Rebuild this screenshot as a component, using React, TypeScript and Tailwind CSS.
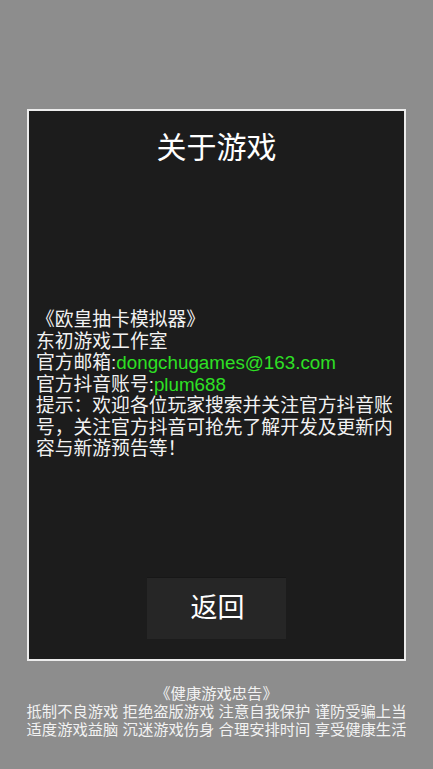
export default function App() {
  const font = { fontFamily: '"Liberation Sans", "Noto Sans CJK SC", sans-serif' };
  return (
    <div className="w-full h-[769px] bg-[#8d8d8d] flex flex-col overflow-hidden" style={font}>
      <div className="mt-[109px] mx-[27px] h-[552px] border-2 border-[#ececec] bg-[#1c1c1c] flex flex-col">
        <div className="pt-[19px] text-center text-white text-[30px] leading-[36px]">关于游戏</div>
        <div className="mt-[143px] pl-[7px] pr-[4px] text-[#f2f2f2] text-[18.8px] leading-[21.5px]">
          <div>《欧皇抽卡模拟器》</div>
          <div>东初游戏工作室</div>
          <div>
            官方邮箱:<span className="text-[#2ee024]">dongchugames@163.com</span>
          </div>
          <div>
            官方抖音账号:<span className="text-[#2ee024]">plum688</span>
          </div>
          <div>提示：欢迎各位玩家搜索并关注官方抖音账号，关注官方抖音可抢先了解开发及更新内容与新游预告等！</div>
        </div>
        <div className="mt-auto mb-[20px] flex justify-center">
          <button className="w-[139px] h-[62px] bg-[#262626] border-t border-[#171717] text-white text-[27px] pl-[2px]">
            返回
          </button>
        </div>
      </div>
      <div className="mt-[24px] text-center text-[#f2f2f2] text-[15.3px] leading-[18px]">
        <div>《健康游戏忠告》</div>
        <div>抵制不良游戏 拒绝盗版游戏 注意自我保护 谨防受骗上当</div>
        <div>适度游戏益脑 沉迷游戏伤身 合理安排时间 享受健康生活</div>
      </div>
    </div>
  );
}
